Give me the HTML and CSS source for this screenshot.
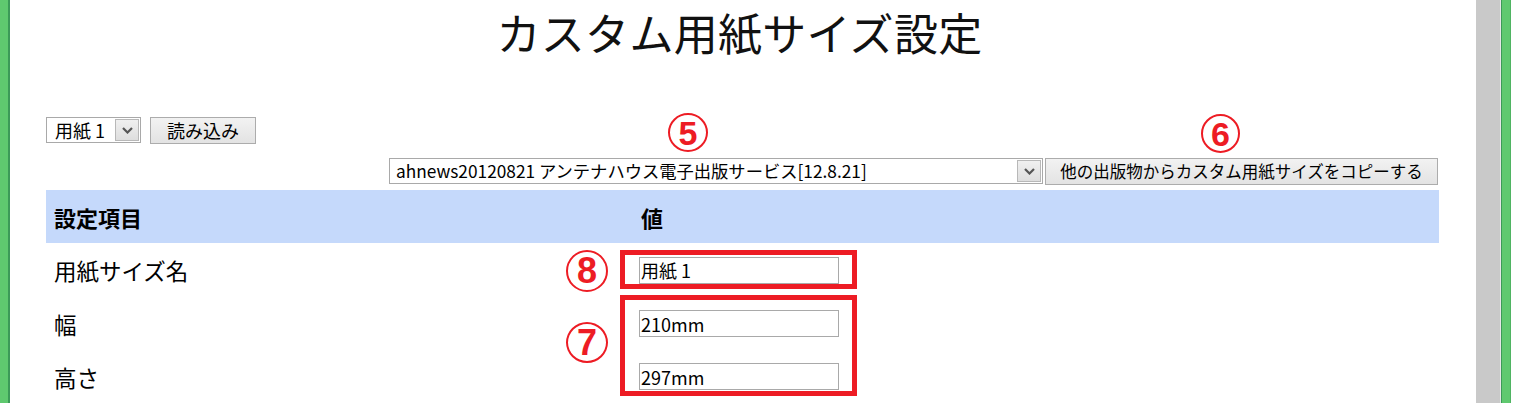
FILE: index.html
```html
<!DOCTYPE html>
<html lang="ja">
<head>
<meta charset="utf-8">
<title>カスタム用紙サイズ設定</title>
<link rel="stylesheet" href="styles.css">
</head>
<body>
<div class="frame">
  <div class="edge-left"></div>
  <main class="page">
    <h1 class="title">カスタム用紙サイズ設定</h1>
    <div class="row-load">
      <span class="sel sel-small">
        <select class="sel-box"><option>用紙 1</option></select>
        <span class="sel-arrow"><svg width="11" height="7" viewBox="0 0 11 7"><polyline points="1,1 5.5,5.5 10,1" fill="none" stroke="#555" stroke-width="2.2"/></svg></span>
      </span>
      <button class="btn btn-load">読み込み</button>
    </div>
    <div class="row-copy">
      <span class="sel sel-big">
        <select class="sel-box"><option>ahnews20120821 アンテナハウス電子出版サービス[12.8.21]</option></select>
        <span class="sel-arrow"><svg width="11" height="7" viewBox="0 0 11 7"><polyline points="1,1 5.5,5.5 10,1" fill="none" stroke="#555" stroke-width="2.2"/></svg></span>
      </span>
      <button class="btn btn-copy">他の出版物からカスタム用紙サイズをコピーする</button>
    </div>
    <table class="settings">
      <thead>
        <tr class="head-row"><th class="col-name">設定項目</th><th class="col-val">値</th></tr>
      </thead>
      <tbody>
        <tr class="r1"><td class="label">用紙サイズ名</td><td class="val"><input class="field" type="text" value="用紙 1"></td></tr>
        <tr class="r2"><td class="label">幅</td><td class="val"><input class="field" type="text" value="210mm"></td></tr>
        <tr class="r3"><td class="label">高さ</td><td class="val"><input class="field" type="text" value="297mm"></td></tr>
      </tbody>
    </table>
  </main>
  <div class="scrollbar"></div>
  <div class="scroll-sep"></div>
  <div class="edge-right"></div>

  <span class="mark mark-5">5</span>
  <span class="mark mark-6">6</span>
  <span class="mark mark-8">8</span>
  <span class="mark mark-7">7</span>
  <div class="redbox redbox-1"></div>
  <div class="redbox redbox-2"></div>
</div>
</body>
</html>
```
FILE: styles.css
```css
html, body {
  margin: 0;
  padding: 0;
  background: #fff;
  overflow: hidden;
}
body {
  font-family: "Noto Sans CJK JP", "Noto Sans", sans-serif;
  color: #000;
}
.frame {
  position: relative;
  display: flex;
  width: 1513px;
  height: 403px;
  overflow: hidden;
}
.edge-left {
  width: 8px;
  flex: none;
  background: #5fc96f;
  border-right: 2px solid #3c9a58;
}
.page {
  flex: 1;
  padding: 0 37px 0 36px;
  min-width: 0;
}
.title {
  margin: 0;
  height: 64px;
  line-height: 64px;
  font-size: 44px;
  font-weight: normal;
  text-align: center;
  letter-spacing: 0.3px;
  padding-right: 6px;
  color: #111;
}
.row-load {
  margin-top: 53px;
  display: flex;
  align-items: flex-start;
  gap: 9px;
  height: 27px;
}
.row-copy {
  margin-top: 14px;
  display: flex;
  justify-content: flex-end;
  gap: 2px;
  height: 27px;
  padding-right: 1px;
}
.sel {
  display: flex;
  height: 26px;
  box-sizing: border-box;
  border: 1px solid #a9a9a9;
  background: #fff;
}
.sel-box {
  appearance: none;
  -webkit-appearance: none;
  border: none;
  outline: none;
  background: #fff;
  margin: 0;
  height: 24px;
  font-family: "Noto Sans CJK JP", sans-serif;
  font-size: 18px;
  line-height: 24px;
  color: #000;
  padding: 0;
}
.sel-small { width: 95px; }
.sel-small .sel-box { width: 69px; padding-left: 8px; }
.sel-big { width: 654px; }
.sel-big .sel-box { width: 628px; padding-left: 6px; font-size: 17.3px; }
.sel-arrow {
  width: 24px;
  height: 22px;
  margin: 1px 1px 1px 0;
  box-sizing: border-box;
  border: 1px solid #b8b8b8;
  background: linear-gradient(#f0f0f0, #dedede);
  display: flex;
  align-items: center;
  justify-content: center;
}
.btn {
  height: 27px;
  box-sizing: border-box;
  border: 1px solid #acacac;
  background: linear-gradient(#f2f2f2, #e3e3e3);
  font-family: "Noto Sans CJK JP", sans-serif;
  color: #000;
  margin: 0;
  padding: 0;
  line-height: 25px;
}
.btn-load {
  width: 106px;
  font-size: 18px;
}
.btn-copy {
  width: 393px;
  font-size: 16.5px;
}
.settings {
  margin-top: 5px;
  width: 1393px;
  border-collapse: collapse;
  font-size: 22.5px;
}
.head-row {
  background: #c5d9fb;
  height: 53px;
}
.settings th {
  text-align: left;
  font-weight: bold;
  font-size: 22px;
  padding: 0 0 0 8px;
}
.col-name { width: 579px; }
.settings td { padding: 0; }
.label { padding-left: 8px !important; }
.val { padding-left: 6px !important; }
.r1 { height: 54px; }
.r2 { height: 53px; }
.r3 { height: 53px; }
.field {
  display: block;
  width: 200px;
  height: 27px;
  box-sizing: border-box;
  border: 1px solid #a9a9a9;
  padding: 0 1px;
  margin: 0;
  font-family: "Noto Sans CJK JP", sans-serif;
  font-size: 18px;
  color: #000;
  outline: none;
}
.scrollbar {
  width: 24px;
  flex: none;
  background: #c9c9c9;
}
.scroll-sep {
  width: 1px;
  flex: none;
  background: #e6e6e6;
}
.edge-right {
  width: 8px;
  flex: none;
  background: #5fc96f;
  border-left: 1px solid #3c9a58;
  border-right: 1px solid #4fb462;
  margin-right: 2px;
}
.mark {
  position: absolute;
  box-sizing: border-box;
  border: 2px solid #ed1c24;
  border-radius: 50%;
  color: #ed1c24;
  font-family: "Liberation Sans", Arial, sans-serif;
  font-weight: bold;
  font-size: 34px;
  display: flex;
  align-items: center;
  justify-content: center;
  line-height: 1;
}
.mark-5 { left: 668px; top: 113px; width: 40px; height: 39px; }
.mark-6 { left: 1201px; top: 114px; width: 39px; height: 39px; }
.mark-8 { left: 566px; top: 250px; width: 42px; height: 42px; font-size: 36px; }
.mark-7 { left: 566px; top: 322px; width: 42px; height: 41px; font-size: 36px; }
.redbox {
  position: absolute;
  box-sizing: border-box;
  border: 5px solid #ed1c24;
}
.redbox-1 { left: 620px; top: 250px; width: 237px; height: 39px; }
.redbox-2 { left: 620px; top: 295px; width: 237px; height: 101px; }
```
